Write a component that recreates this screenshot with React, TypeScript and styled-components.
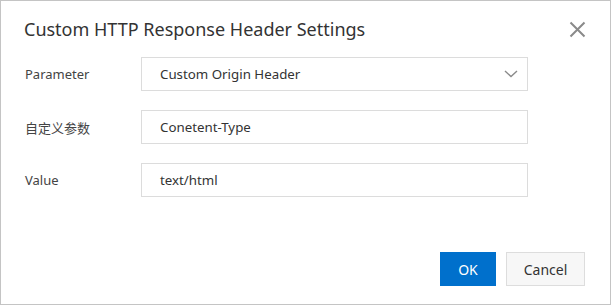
import React from 'react';
import styled, { createGlobalStyle } from 'styled-components';

const GlobalStyle = createGlobalStyle`
  html, body {
    margin: 0;
    padding: 0;
    background: #ffffff;
  }
  * {
    box-sizing: border-box;
  }
`;

const Dialog = styled.div`
  display: flex;
  flex-direction: column;
  width: 611px;
  height: 305px;
  background: #ffffff;
  border: 1px solid #c4c4c4;
  font-family: 'Noto Sans', 'Noto Sans CJK SC', sans-serif;
  color: #333333;
`;

const Header = styled.div`
  display: flex;
  align-items: center;
  justify-content: space-between;
  height: 56px;
  padding: 0 24px 0 23px;
`;

const Title = styled.h2`
  margin: 0;
  font-size: 18px;
  font-weight: 400;
  color: #333333;
`;

const CloseButton = styled.button`
  display: flex;
  align-items: center;
  justify-content: center;
  width: 18px;
  height: 18px;
  padding: 0;
  background: transparent;
  border: none;
  cursor: pointer;
`;

const Body = styled.div`
  display: flex;
  flex-direction: column;
  gap: 19px;
  padding: 0 0 0 24px;
`;

const Row = styled.div`
  display: grid;
  grid-template-columns: 116px 387px;
  align-items: center;
`;

const Label = styled.label`
  font-size: 13px;
  color: #444444;
`;

const Field = styled.div`
  display: flex;
  align-items: center;
  justify-content: space-between;
  height: 34px;
  padding: 0 9px 0 18px;
  border: 1px solid #dcdcdc;
  background: #ffffff;
  font-size: 13.3px;
  color: #333333;
`;

const Footer = styled.div`
  display: flex;
  justify-content: flex-end;
  gap: 10px;
  margin-top: auto;
  padding: 0 25px 18px 0;
`;

const Button = styled.button<{ $primary?: boolean }>`
  height: 34px;
  padding: 0 16px;
  min-width: ${({ $primary }) => ($primary ? '56px' : '79px')};
  font-family: inherit;
  font-size: 14px;
  border: 1px solid ${({ $primary }) => ($primary ? '#0070cc' : '#dddddd')};
  background: ${({ $primary }) => ($primary ? '#0070cc' : '#f7f7f7')};
  color: ${({ $primary }) => ($primary ? '#ffffff' : '#333333')};
  cursor: pointer;
`;

const Chevron = () => (
  <svg width="14" height="8" viewBox="0 0 14 8" fill="none">
    <path d="M1 1l6 5.5L13 1" stroke="#8a8a8a" strokeWidth="1.4" />
  </svg>
);

const CloseIcon = () => (
  <svg width="17" height="17" viewBox="0 0 17 17" fill="none">
    <path d="M1.5 1.5l14 14M15.5 1.5l-14 14" stroke="#8a8a8a" strokeWidth="2" />
  </svg>
);

const fields = [
  { label: 'Parameter', value: 'Custom Origin Header', select: true },
  { label: '自定义参数', value: 'Conetent-Type' },
  { label: 'Value', value: 'text/html' },
];

export default function App() {
  return (
    <>
      <GlobalStyle />
      <Dialog>
        <Header>
          <Title>Custom HTTP Response Header Settings</Title>
          <CloseButton aria-label="Close">
            <CloseIcon />
          </CloseButton>
        </Header>
        <Body>
          {fields.map((f) => (
            <Row key={f.label}>
              <Label>{f.label}</Label>
              <Field>
                <span>{f.value}</span>
                {f.select && <Chevron />}
              </Field>
            </Row>
          ))}
        </Body>
        <Footer>
          <Button $primary>OK</Button>
          <Button>Cancel</Button>
        </Footer>
      </Dialog>
    </>
  );
}
